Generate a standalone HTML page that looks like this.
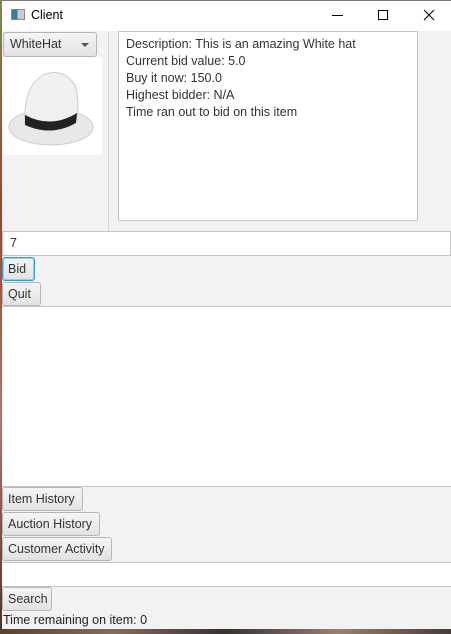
<!DOCTYPE html>
<html><head><style>
*{box-sizing:border-box;margin:0;padding:0}
body{width:451px;height:634px;overflow:hidden;background:#6a5a48;font-family:"Liberation Sans",sans-serif;font-size:12.5px;color:#333;position:relative}
.a{position:absolute;white-space:nowrap}
.btn{position:absolute;left:2px;height:24px;border:1px solid #b5b5b5;border-radius:3px;background:linear-gradient(#f5f5f5,#e2e2e2);padding:0 5px;line-height:23px;font-size:12.5px;color:#333;white-space:nowrap;overflow:hidden}
</style></head><body>
<div class="a" style="left:0;top:0;width:2px;height:634px;background:linear-gradient(#7a8a50,#a04030,#c07060,#503020)"></div>
<div class="a" style="left:2px;top:0;width:449px;height:629px;background:#f2f2f2"></div>
<div class="a" style="left:2px;top:0;width:449px;height:31px;background:#fff;border-top:1px solid #777"></div>
<div class="a" style="left:11px;top:9px;width:14px;height:11px;border:1px solid #888;background:linear-gradient(90deg,#3a7a9a 45%,#ccc 45%)"></div>
<div class="a" style="left:31px;top:8px;font-size:12.5px;color:#000">Client</div>
<div class="a" style="left:332px;top:15px;width:11px;height:1px;background:#000"></div>
<div class="a" style="left:378px;top:10px;width:10px;height:10px;border:1px solid #000"></div>
<svg class="a" style="left:423px;top:9px" width="12" height="12"><path d="M1 1L11 11M11 1L1 11" stroke="#000" stroke-width="1"/></svg>
<div class="btn" style="left:3px;top:32px;width:94px;height:25px;line-height:23px;padding-left:6px">WhiteHat<span style="position:absolute;right:7px;top:10px;border:4px solid transparent;border-top:4px solid #555;border-bottom:0"></span></div>
<div class="a" style="left:3px;top:57px;width:99px;height:98px;background:#fff">
<svg width="99" height="98"><ellipse cx="48" cy="70" rx="42" ry="18" fill="#e8e8e8" stroke="#ccc"/><path d="M22 66 Q20 30 40 18 Q60 10 72 28 Q78 50 72 66 Q48 78 22 66Z" fill="#f0f0f0" stroke="#ccc"/><path d="M22 58 Q48 72 74 56 L73 66 Q48 80 22 68Z" fill="#222"/></svg></div>
<div class="a" style="left:108px;top:31px;width:1px;height:200px;background:#d8d8d8"></div>
<div class="a" style="left:118px;top:31px;width:300px;height:190px;background:#fff;border:1px solid #c4c4c4;border-radius:2px;padding:4px 7px;line-height:17px">Description: This is an amazing White hat<br>Current bid value: 5.0<br>Buy it now: 150.0<br>Highest bidder: N/A<br>Time ran out to bid on this item</div>
<div class="a" style="left:2px;top:231px;width:449px;height:25px;background:#fff;border:1px solid #c4c4c4;padding-left:7px;line-height:23px">7</div>
<div class="btn" style="top:257px;left:2px;width:33px;border:1px solid #29a3d6;box-shadow:0 0 0 1px #8fd0ea inset">Bid</div>
<div class="btn" style="top:282px;width:39px">Quit</div>
<div class="a" style="left:2px;top:306px;width:449px;height:181px;background:#fff;border-top:1px solid #c4c4c4;border-bottom:1px solid #c4c4c4"></div>
<div class="btn" style="top:487px;width:81px">Item History</div>
<div class="btn" style="top:512px;width:98px">Auction History</div>
<div class="btn" style="top:537px;width:110px">Customer Activity</div>
<div class="a" style="left:2px;top:562px;width:449px;height:25px;background:#fff;border-top:1px solid #c4c4c4;border-bottom:1px solid #c4c4c4"></div>
<div class="btn" style="top:587px;width:50px">Search</div>
<div class="a" style="left:3px;top:613px;color:#222">Time remaining on item: 0</div>
<div class="a" style="left:0;top:629px;width:451px;height:5px;background:linear-gradient(90deg,#5a4030,#8a6a5a,#3a3030,#9a8070,#4a3a30)"></div>
</body></html>
